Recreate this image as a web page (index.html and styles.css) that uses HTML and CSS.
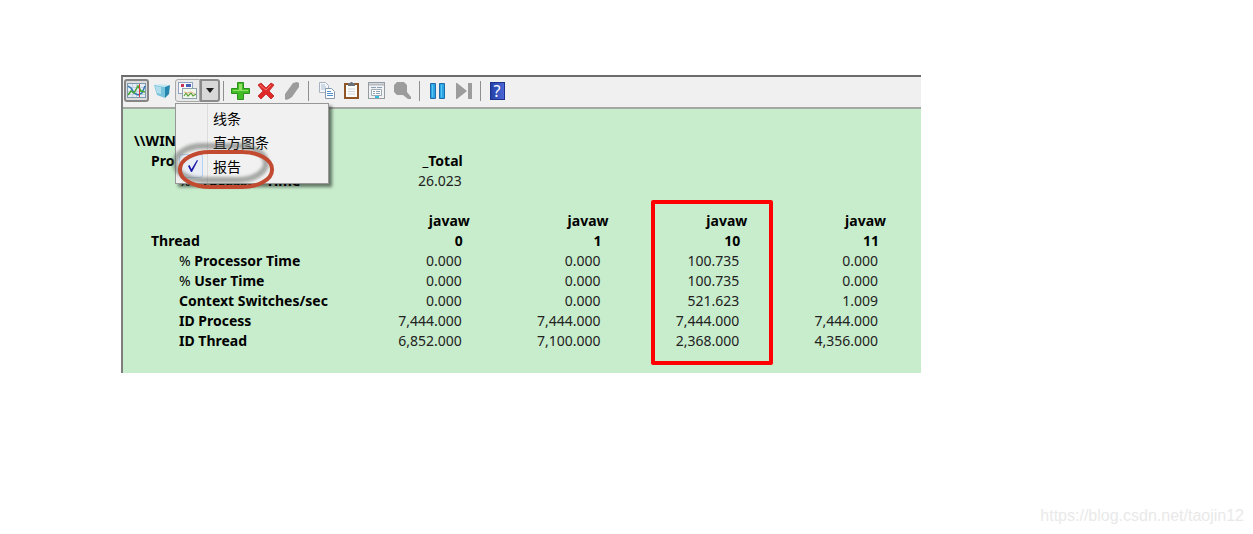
FILE: index.html
```html
<!DOCTYPE html>
<html lang="zh-CN">
<head>
<meta charset="utf-8">
<title>Performance Monitor</title>
<link rel="stylesheet" href="styles.css">
</head>
<body>
<main class="monitor">
  <div class="toolbar" role="toolbar" aria-label="Performance Monitor">
    <button class="tool tool--pressed" type="button" aria-label="View current activity">
      <svg width="19" height="15" viewBox="0 0 19 15"><rect x=".5" y=".5" width="18" height="14" fill="#e4edf5" stroke="#7f99ae"/><path d="M1 4.500h17M1 8.500h17M1 11.500h17M5.500 1v13M9.500 1v13" stroke="#c3d3e0" fill="none"/><path d="M1 3l3 2 3 5 4 2 4-2 3-7" stroke="#2f78b4" stroke-width="1.5" fill="none"/><path d="M1 12l3-4 3 2 4-7 3 5 4 1" stroke="#45a52f" stroke-width="1.5" fill="none"/><path d="M12.500 1v13" stroke="#df3e35"/></svg>
    </button>
    <button class="tool" type="button" aria-label="View log data">
      <svg width="17" height="16" viewBox="0 0 17 16"><path d="M0 2l6-1 10 1-4 2z" fill="#c8e8f2"/><path d="M0 2l11 2v11L3 12z" fill="#78c3dc"/><path d="M11 4l5-2-1 9-4 4z" fill="#2587ad"/><path d="M1 3l6 1v7l-4-1z" fill="#b0deec"/></svg>
    </button>
    <div class="split">
      <button class="tool split__main" type="button" aria-label="Change graph type">
        <svg width="19" height="17" viewBox="0 0 19 17"><rect x=".5" y=".5" width="14" height="11" fill="#f6f8fa" stroke="#8fa3c0"/><path d="M3 2h3v3H3z" fill="#c9335a"/><path d="M8 2h5v3H8z" fill="#4560b5"/><rect x="4.500" y="6.500" width="14" height="10" fill="#f2f7ec" stroke="#8da0ad"/><path d="M6 14l2-3 2 3 3-3 2 3 3-2" stroke="#5ca23c" stroke-width="1.200" fill="none"/><path d="M6 10l3 1 4-1 4 2" stroke="#e0b08a" fill="none"/></svg>
      </button>
      <button class="tool split__arrow" type="button" aria-label="Graph types" aria-expanded="true">
        <svg width="8" height="5" viewBox="0 0 8 5"><path d="M0 0h8L4 5z" fill="#1c1c1c"/></svg>
      </button>
      <div class="menu" role="menu">
        <button class="menu__item" type="button" role="menuitemradio" aria-checked="false"><span class="menu__mark"></span>线条</button>
        <button class="menu__item" type="button" role="menuitemradio" aria-checked="false"><span class="menu__mark"></span>直方图条</button>
        <button class="menu__item" type="button" role="menuitemradio" aria-checked="true"><span class="menu__mark menu__mark--on"><svg width="12" height="14" viewBox="0 0 12 14"><path d="M1 7l1.500-1 2 4L10 1l1 .5L5 13H4z" fill="#1a1aa8"/></svg></span>报告</button>
        <svg class="callout" width="110" height="54" viewBox="0 0 110 54" aria-hidden="true">
          <defs><filter id="soft" x="-20%" y="-30%" width="140%" height="160%"><feGaussianBlur stdDeviation="1.800"/></filter></defs>
          <rect x="5" y="6" width="91" height="34" rx="28" ry="17" fill="none" stroke="#5a5f5a" stroke-opacity=".5" stroke-width="6" filter="url(#soft)"/>
          <rect x="10" y="12" width="92" height="35" rx="30" ry="17" fill="none" stroke="#c24a30" stroke-width="4"/>
        </svg>
      </div>
    </div>
    <span class="sep"></span>
    <button class="tool" type="button" aria-label="Add">
      <svg width="19" height="18" viewBox="0 0 19 18"><path d="M6.500 .5h6v6h6v5h-6v6h-6v-6h-6v-5h6z" fill="#43bd27" stroke="#2b8f1c"/><path d="M8 2h3v6h6v1H2V8h6z" fill="#93e067"/></svg>
    </button>
    <button class="tool" type="button" aria-label="Delete">
      <svg width="18" height="18" viewBox="0 0 18 18"><path d="M1 3l3-2 5 5 5-5 3 2-5 6 5 5-3 3-5-5-5 5-3-3 5-5z" fill="#df2a29" stroke="#c43a3a"/><path d="M3 3l6 5 5-5" stroke="#f47a70" fill="none"/></svg>
    </button>
    <button class="tool" type="button" aria-label="Highlight">
      <svg width="14" height="18" viewBox="0 0 14 18"><path d="M8 1l4-1 2 1v4L7 15l-3 2-3 1-1-1v-5z" fill="#9c9c9c"/></svg>
    </button>
    <span class="sep sep--after"></span>
    <button class="tool tool--narrow" type="button" aria-label="Copy properties">
      <svg width="16" height="17" viewBox="0 0 16 17"><path d="M.5 .5h6l3 3v7h-9z" fill="#f4f7fa" stroke="#a7b2be"/><path d="M2 3h4M2 5h5M2 7h5" stroke="#a9bdd1"/><path d="M6.500 6.500h6l3 3v7h-9z" fill="#fff" stroke="#8497ad"/><path d="M8 9.500h4M8 11.500h6M8 13.500h6" stroke="#4f8fc9"/></svg>
    </button>
    <button class="tool tool--narrow" type="button" aria-label="Paste counter list">
      <svg width="15" height="17" viewBox="0 0 15 17"><rect x="1" y="2" width="13" height="14" fill="#fbfbfa" stroke="#8f5527" stroke-width="2"/><path d="M4 1h2l1-1h1l1 1h2v3H4z" fill="#6c7076"/><path d="M4 7h7M4 9.500h7M4 12h7" stroke="#ced3d7"/></svg>
    </button>
    <button class="tool tool--narrow" type="button" aria-label="Properties">
      <svg width="17" height="17" viewBox="0 0 17 17"><rect x=".5" y=".5" width="16" height="16" fill="#f1f2f3" stroke="#959ba1"/><path d="M1 2.500h15" stroke="#b5bbc1" stroke-width="2"/><path d="M3.500 7.500h10v6h-10z" fill="#fff" stroke="#9caab6"/><path d="M3 5.500h5M9 5.500h5M5 9.500h2M8 9.500h4M5 11.500h2M8 11.500h4" stroke="#8ca0b1"/><path d="M7 15h4" stroke="#34bce2" stroke-width="2"/></svg>
    </button>
    <button class="tool tool--narrow" type="button" aria-label="Zoom">
      <svg width="18" height="18" viewBox="0 0 18 18"><path d="M4 0h7l3 3v7l4 5v2h-3l-5-4H4l-3-3V3z" fill="#9c9c9c"/></svg>
    </button>
    <span class="sep sep--wide"></span>
    <button class="tool" type="button" aria-label="Freeze display">
      <svg width="16" height="16" viewBox="0 0 16 16"><path d="M.5 .5h5v15h-5zM9.500 .5h5v15h-5z" fill="#2da4e4" stroke="#1c6da9"/><path d="M2.500 2v12M11.500 2v12" stroke="#58c6f2"/></svg>
    </button>
    <button class="tool" type="button" aria-label="Update data">
      <svg width="16" height="16" viewBox="0 0 16 16"><path d="M0 0h1l10 8-10 8H0zM12 0h4v16h-4z" fill="#9c9c9c"/></svg>
    </button>
    <span class="sep"></span>
    <button class="tool" type="button" aria-label="Help"><span class="help">?</span></button>
  </div>

  <div class="report">
    <table class="counters">
      <colgroup><col class="counters__label"><col><col><col><col></colgroup>
      <tbody>
        <tr><th class="level-0" scope="row">\\WIN</th><td></td><td></td><td></td><td></td></tr>
        <tr><th class="level-1" scope="row">Processor</th><th class="instance">_Total</th><td></td><td></td><td></td></tr>
        <tr><th class="level-2" scope="row"><span class="percent">%</span> Processor Time</th><td>26.023</td><td></td><td></td><td></td></tr>
        <tr><td></td><td></td><td></td><td></td><td></td></tr>
        <tr><td></td><th class="process">javaw</th><th class="process">javaw</th><th class="process marked">javaw<span class="highlight"></span></th><th class="process">javaw</th></tr>
        <tr><th class="level-1" scope="row">Thread</th><th class="instance">0</th><th class="instance">1</th><th class="instance">10</th><th class="instance">11</th></tr>
        <tr><th class="level-2" scope="row"><span class="percent">%</span> Processor Time</th><td>0.000</td><td>0.000</td><td>100.735</td><td>0.000</td></tr>
        <tr><th class="level-2" scope="row"><span class="percent">%</span> User Time</th><td>0.000</td><td>0.000</td><td>100.735</td><td>0.000</td></tr>
        <tr><th class="level-2" scope="row">Context Switches/sec</th><td>0.000</td><td>0.000</td><td>521.623</td><td>1.009</td></tr>
        <tr><th class="level-2" scope="row">ID Process</th><td>7,444.000</td><td>7,444.000</td><td>7,444.000</td><td>7,444.000</td></tr>
        <tr><th class="level-2" scope="row">ID Thread</th><td>6,852.000</td><td>7,100.000</td><td>2,368.000</td><td>4,356.000</td></tr>
      </tbody>
    </table>
  </div>
</main>
<footer class="watermark">https://blog.csdn.net/taojin12</footer>
</body>
</html>
```

FILE: styles.css
```css
* { box-sizing: border-box; }

body {
  margin: 0;
  padding-top: 75px;
  background: #fff;
  color: #000;
  font-family: "Noto Sans", "Noto Sans CJK SC", sans-serif;
  font-size: 14px;
}

button { font: inherit; color: inherit; }

.monitor {
  margin: 0 332px 0 121px;
  border-top: 2px solid #6b6b6b;
  border-left: 2px solid #7d7d7d;
}

.toolbar {
  display: flex;
  align-items: center;
  height: 32px;
  padding: 0 1px 3px;
  background: #f0f0f0;
  border-bottom: 2px solid #a3a8a3;
}

.tool {
  display: flex;
  flex: none;
  align-items: center;
  justify-content: center;
  width: 26px;
  height: 23px;
  padding: 0;
  border: 0;
  background: none;
}

.tool--narrow { width: 25px; }

.tool--pressed {
  width: 25px;
  border: 2px solid #858585;
  border-radius: 3px;
  background: #dcdcdc;
}

.split {
  position: relative;
  display: flex;
}

.split__main {
  width: 25px;
  border: 1px solid #a9a9a9;
  border-radius: 3px 0 0 3px;
  background: #e9e9e9;
}

.split__arrow {
  width: 20px;
  border: 2px solid #8a8a8a;
  border-radius: 0 3px 3px 0;
  background: #d8d8d8;
}

.sep {
  flex: none;
  width: 1px;
  height: 20px;
  margin: 0 3px;
  background: #8f8f8f;
}

.sep--after { margin-right: 5px; }
.sep--wide { margin: 0 5px; }

.help {
  width: 15px;
  height: 18px;
  border: 1px solid #1d328c;
  background: linear-gradient(90deg, #2440a8, #4b68d6);
  color: #fff;
  font: 16px/16px "Noto Sans", sans-serif;
  text-align: center;
}

.menu {
  position: absolute;
  z-index: 2;
  top: 24px;
  left: 0;
  width: 154px;
  padding: 2px 2px 5px;
  border: 1px solid #979797;
  background: linear-gradient(90deg, #f0f0f0 31px, #dcdcdc 31px, #dcdcdc 32px, #f1f1f1 32px);
  box-shadow: 3px 3px 3px rgba(0, 0, 0, .5);
}

.menu__item {
  display: flex;
  align-items: center;
  width: 100%;
  height: 24px;
  padding: 0;
  border: 0;
  background: none;
  font-family: "Noto Sans CJK SC", sans-serif;
  font-size: 14px;
}

.menu__mark {
  display: flex;
  align-items: center;
  justify-content: center;
  width: 24px;
  height: 24px;
  margin: 0 10px 0 1px;
}

.menu__mark--on {
  border: 1px solid #b3d0f0;
  border-radius: 3px;
  background: #e9eef6;
  padding-left: 4px;
}

.callout {
  position: absolute;
  top: 36px;
  left: -6px;
  pointer-events: none;
}

.report {
  padding: 22px 19px 22px 0;
  background: #c8edcc;
}

.counters {
  width: 100%;
  border-collapse: collapse;
  table-layout: fixed;
}

.counters__label { width: 224px; }

.counters th,
.counters td {
  height: 20px;
  padding: 0;
  line-height: 20px;
  white-space: nowrap;
  text-align: left;
}

.counters td {
  padding-right: 24px;
  color: #222;
  text-align: right;
}

.counters .instance {
  padding-right: 23px;
  text-align: right;
}

.counters .process {
  padding-right: 16px;
  text-align: right;
}

.counters .level-0 { padding-left: 11px; }
.counters .level-1 { padding-left: 28px; }
.counters .level-2 { padding-left: 56px; }

.percent { font-weight: 400; }

.marked { position: relative; }

.highlight {
  position: absolute;
  top: -11px;
  right: -10px;
  width: 122px;
  height: 165px;
  border: 4px solid #f00;
  border-radius: 2px;
}

.watermark {
  margin-top: 133px;
  padding-right: 9px;
  color: #e9e9e9;
  font: 16px/20px "Liberation Sans", sans-serif;
  text-align: right;
}
```
